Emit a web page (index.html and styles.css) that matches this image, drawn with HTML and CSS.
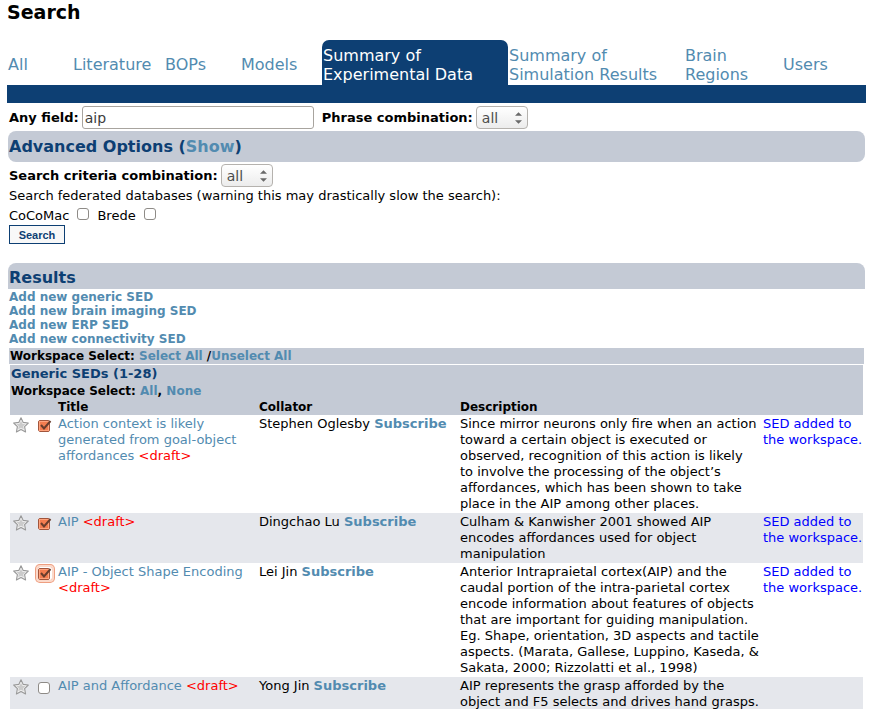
FILE: index.html
```html
<!DOCTYPE html>
<html lang="en">
<head>
<meta charset="utf-8">
<title>Search</title>
<link rel="stylesheet" href="styles.css">
</head>
<body>
<svg class="defs" width="0" height="0" aria-hidden="true">
  <defs>
    <symbol id="star" viewBox="0 0 16 16">
      <path d="M8 .8 10.2 5.4 15.3 6 11.6 9.6 12.6 15 8 12.4 3.4 15 4.4 9.6 .7 6 5.8 5.4Z" fill="#f2f2f2" stroke="#999" stroke-width="1.1" stroke-linejoin="round"/>
      <path d="M8 3.8 9.4 6.8 12.5 7.2 10.2 9.3 10.8 12.3 8 10.7 5.2 12.3 5.8 9.3 3.5 7.2 6.6 6.8Z" fill="#cbcbcb"/>
    </symbol>
  </defs>
</svg>
<main class="page">
  <h1>Search</h1>
  <nav class="tabs">
    <a href="#">All</a>
    <a href="#">Literature</a>
    <a href="#">BOPs</a>
    <a href="#">Models</a>
    <a href="#" class="active">Summary of<br>Experimental Data</a>
    <a href="#">Summary of<br>Simulation Results</a>
    <a href="#">Brain<br>Regions</a>
    <a href="#">Users</a>
  </nav>
  <form class="search">
    <div class="row">
      <label class="strong" for="any">Any field:</label>
      <input type="text" id="any" class="text" value="aip">
      <label class="strong" for="phrase">Phrase combination:</label>
      <span class="select"><select id="phrase"><option>all</option><option>any</option></select><svg viewBox="0 0 8 13" aria-hidden="true"><path d="M0 4 4 0 8 4ZM0 9 4 13 8 9Z"/></svg></span>
    </div>
    <h2 class="bar advanced">Advanced Options (<a href="#">Show</a>)</h2>
    <div class="row criteria">
      <label class="strong" for="criteria">Search criteria combination:</label>
      <span class="select"><select id="criteria"><option>all</option><option>any</option></select><svg viewBox="0 0 8 13" aria-hidden="true"><path d="M0 4 4 0 8 4ZM0 9 4 13 8 9Z"/></svg></span>
    </div>
    <p class="note">Search federated databases (warning this may drastically slow the search):</p>
    <div class="databases">
      <label for="cocomac">CoCoMac</label><input type="checkbox" id="cocomac">
      <label for="brede">Brede</label><input type="checkbox" id="brede">
    </div>
    <button type="submit" class="submit">Search</button>
  </form>
  <section class="results">
    <h2 class="bar heading">Results</h2>
    <ul class="add">
      <li><a href="#">Add new generic SED</a></li>
      <li><a href="#">Add new brain imaging SED</a></li>
      <li><a href="#">Add new ERP SED</a></li>
      <li><a href="#">Add new connectivity SED</a></li>
    </ul>
    <div class="workspace">Workspace Select: <a href="#">Select All</a> /<a href="#">Unselect All</a></div>
    <div class="group">
      <h3>Generic SEDs (1-28)</h3>
      <div class="pick">Workspace Select: <a href="#">All</a>, <a href="#">None</a></div>
      <table>
        <colgroup><col class="c-star"><col class="c-check"><col class="c-title"><col class="c-collator"><col class="c-desc"><col class="c-status"></colgroup>
        <thead>
          <tr><th></th><th></th><th>Title</th><th>Collator</th><th>Description</th><th></th></tr>
        </thead>
        <tbody>
          <tr>
            <td><svg class="star" aria-hidden="true"><use href="#star"/></svg></td>
            <td><input type="checkbox" checked aria-label="Select Action context"></td>
            <td><a href="#">Action context is likely generated from goal-object affordances</a> <span class="draft">&lt;draft&gt;</span></td>
            <td>Stephen Oglesby <a href="#" class="subscribe">Subscribe</a></td>
            <td>Since mirror neurons only fire when an action toward a certain object is executed or observed, recognition of this action is likely to&nbsp;involve the processing of the object’s affordances, which has been shown to take place in the AIP among other places.</td>
            <td class="status">SED added to the workspace.</td>
          </tr>
          <tr>
            <td><svg class="star" aria-hidden="true"><use href="#star"/></svg></td>
            <td><input type="checkbox" checked aria-label="Select AIP"></td>
            <td><a href="#">AIP</a> <span class="draft">&lt;draft&gt;</span></td>
            <td>Dingchao Lu <a href="#" class="subscribe">Subscribe</a></td>
            <td>Culham &amp; Kanwisher 2001 showed AIP encodes affordances used for object manipulation</td>
            <td class="status">SED added to the workspace.</td>
          </tr>
          <tr>
            <td><svg class="star" aria-hidden="true"><use href="#star"/></svg></td>
            <td><input type="checkbox" checked class="focused" aria-label="Select AIP - Object Shape Encoding"></td>
            <td><a href="#">AIP - Object Shape Encoding</a> <span class="draft">&lt;draft&gt;</span></td>
            <td>Lei Jin <a href="#" class="subscribe">Subscribe</a></td>
            <td>Anterior Intrapraietal cortex(AIP) and the caudal portion of the intra-parietal cortex encode information about features of objects that are important for guiding manipulation. Eg. Shape, orientation, 3D aspects and tactile aspects. (Marata, Gallese, Luppino, Kaseda, &amp; Sakata, 2000; Rizzolatti et al., 1998)</td>
            <td class="status">SED added to the workspace.</td>
          </tr>
          <tr>
            <td><svg class="star" aria-hidden="true"><use href="#star"/></svg></td>
            <td><input type="checkbox" aria-label="Select AIP and Affordance"></td>
            <td><a href="#">AIP and Affordance</a> <span class="draft">&lt;draft&gt;</span></td>
            <td>Yong Jin <a href="#" class="subscribe">Subscribe</a></td>
            <td>AIP represents the grasp afforded by the object and F5 selects and drives hand grasps.</td>
            <td></td>
          </tr>
        </tbody>
      </table>
    </div>
  </section>
</main>
</body>
</html>
```
FILE: styles.css
```css
* { box-sizing: border-box; }

body {
  margin: 0;
  background: #fff;
  color: #000;
  font: 13px/16px "DejaVu Sans", sans-serif;
}

.defs { position: absolute; }

.page { padding: 0 22px 0 7px; }

a { color: #528bb0; text-decoration: none; }

h1, h2, h3, p, ul { margin: 0; padding: 0; }

h1 { font-size: 19px; line-height: 24px; margin-bottom: 16px; }

.tabs {
  display: grid;
  grid-template-columns: 65fr 92fr 76fr 82fr 186fr 176fr 98fr 84fr;
  border-bottom: 18px solid #0d3f73;
}

.tabs a {
  display: flex;
  align-items: center;
  padding: 5px 1px 1px;
  min-height: 45px;
  font-size: 16px;
  line-height: 19px;
}

.tabs .active {
  color: #fff;
  background: #0d3f73;
  border-radius: 7px 7px 0 0;
}

.row {
  display: flex;
  align-items: center;
  gap: 3px;
  padding: 3px 2px 2px;
}

.strong { padding-top: 1px; font-weight: bold; }

.text {
  width: 232px;
  height: 23px;
  margin-right: 5px;
  padding: 0 2px;
  border: 1px solid #a8a49f;
  border-radius: 3px;
  background: #fff;
  color: #3c3c3c;
  font: 14px "DejaVu Sans", sans-serif;
}

.select { position: relative; display: inline-flex; }

.select select {
  appearance: none;
  width: 52px;
  height: 23px;
  padding: 0 5px;
  border: 1px solid #b5b2ae;
  border-radius: 4px;
  background: linear-gradient(#fff, #ececec);
  color: #4c4c4c;
  font: 14px "DejaVu Sans", sans-serif;
}

.select svg {
  position: absolute;
  right: 6px;
  top: 6px;
  width: 7px;
  height: 12px;
  fill: #6a6a6a;
  pointer-events: none;
}

.bar {
  margin: 0 1px;
  padding: 0 1px;
  background: #c4cad5;
  color: #0d3f73;
  font-size: 16px;
}

.advanced { line-height: 31px; border-radius: 8px; }

.criteria { padding: 2px 2px 0; }

.note { padding: 1px 2px 0; }

.databases {
  display: flex;
  align-items: center;
  gap: 8px;
  padding: 4px 2px 0;
}

input[type="checkbox"] {
  appearance: none;
  display: block;
  width: 12px;
  height: 12px;
  margin: 0;
  border: 1px solid #8e8b87;
  border-radius: 3px;
  background: #fff;
}

.databases input { margin-bottom: 4px; }

.submit {
  display: block;
  width: 56px;
  height: 19px;
  margin: 1px 2px 0;
  padding: 0;
  border: 1px solid #0d3f73;
  background: #f8f8f8;
  color: #0d3f73;
  font: bold 11px "Liberation Sans", sans-serif;
}

.results { margin-top: 19px; }

.heading {
  padding-top: 4px;
  line-height: 22px;
  border-radius: 8px 8px 0 0;
}

.add {
  list-style: none;
  padding: 1px 2px;
  font-size: 12px;
  font-weight: bold;
  line-height: 14px;
}

.workspace {
  margin: 1px 2px;
  padding: 0 1px;
  background: #c4cad5;
  font-size: 12px;
  font-weight: bold;
}

.group { margin: 0 3px; }

.group h3 {
  padding: 0 1px 1px;
  background: #c4cad5;
  color: #0d3f73;
  font-size: 13px;
  line-height: 17px;
}

.pick {
  padding: 0 1px;
  background: #c4cad5;
  font-size: 12px;
  font-weight: bold;
}

table {
  width: 100%;
  table-layout: fixed;
  border-collapse: collapse;
}

.c-star { width: 26px; }
.c-check { width: 21px; }
.c-title, .c-collator { width: 201px; }
.c-status { width: 101px; }

th {
  padding: 0 0 0 1px;
  background: #c4cad5;
  font-size: 12px;
  text-align: left;
}

td { padding: 1px 0 1px 1px; vertical-align: top; }

tbody tr:nth-child(even) { background: #e5e7ec; }

.star { display: block; width: 16px; height: 16px; margin: 1px 2px; }

td input[type="checkbox"] { margin: 4px 1px; }

td input[type="checkbox"]:checked {
  width: 14px;
  height: 13px;
  margin-top: 3px;
  border: 0;
  border-radius: 2px;
  background: url("data:image/svg+xml,%3Csvg xmlns='http://www.w3.org/2000/svg' viewBox='0 0 14 13'%3E%3Crect x='.5' y='1.5' width='11' height='11' rx='1.5' fill='%23f47d50' stroke='%23a1553c'/%3E%3Crect x='1.5' y='2.5' width='9' height='9' fill='none' stroke='%23ffa47e'/%3E%3Cpath d='M3 6 6 9.5 12.5 2' fill='none' stroke='%23683c2c' stroke-width='2'/%3E%3C/svg%3E") center / 14px 13px no-repeat;
}

td input.focused { box-shadow: 0 0 0 2px #fbd9ca, 0 0 0 3px #ee9e80; }

.draft { color: #f00; }
.subscribe { font-weight: bold; }
.status { color: #00f; }
```
